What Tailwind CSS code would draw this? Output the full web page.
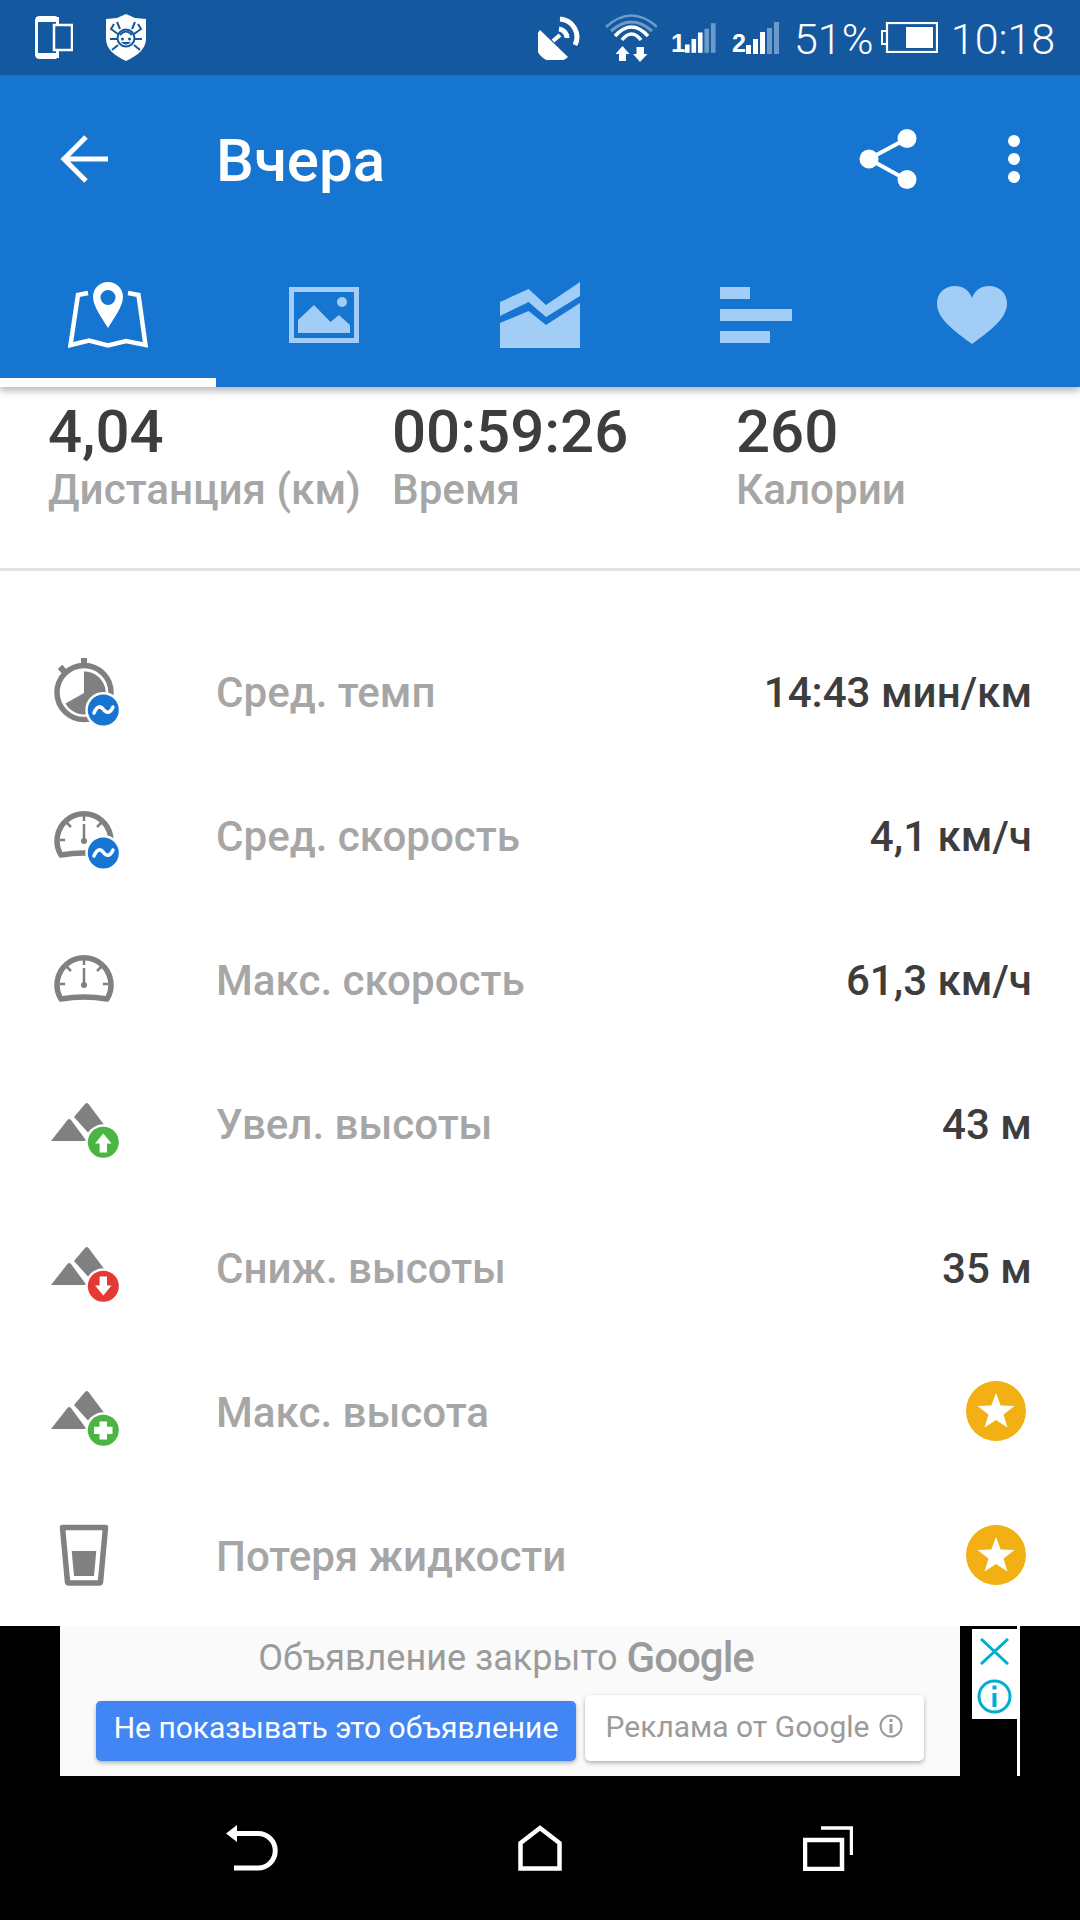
<!DOCTYPE html>
<html lang="ru">
<head>
    <meta charset="UTF-8">
    <meta name="viewport" content="width=device-width, initial-scale=1.0">
    <title>Вчера</title>
    <script src="https://cdn.jsdelivr.net/npm/@tailwindcss/browser@4"></script>
</head>
<body class="bg-white w-[1080px] h-[1920px] overflow-hidden font-['Roboto',sans-serif]">
    <!-- Status bar -->
    <div class="h-[75px] bg-[#14599f] flex items-center text-white">
        <svg class="ml-[35px] w-[38px] h-[43px]" viewBox="0 0 38 43">
            <rect x="1.5" y="1.5" width="21" height="40" rx="3" fill="none" stroke="#fff" stroke-width="3"/>
            <rect x="1" y="1" width="23" height="5" fill="#fff"/>
            <rect x="1" y="37" width="23" height="5" fill="#fff"/>
            <rect x="19" y="9" width="18" height="25" fill="#14599f" stroke="#fff" stroke-width="2.5"/>
        </svg>
        <svg class="ml-[32px] w-[42px] h-[47px]" viewBox="0 0 42 47">
            <path d="M21 0 L30 4 L41 5 V25 C41 35 32 42 21 47 C10 42 1 35 1 25 V5 L12 4Z" fill="#fff"/>
            <g stroke="#14599f" stroke-width="2" fill="none">
                <path d="M13 20 L6 15 L9 10 M29 20 L36 15 L33 10 M12 25 H5 M30 25 H37 M13 31 L7 36 M29 31 L35 36 M15 15 L12 8 M27 15 L30 8"/>
                <circle cx="21" cy="24" r="8.500" fill="#fff"/>
                <path d="M15 21 Q21 14 27 21"/>
            </g>
            <circle cx="17.500" cy="25" r="1.500" fill="#14599f"/>
            <circle cx="24.500" cy="25" r="1.500" fill="#14599f"/>
            <path d="M16 28 Q21 33 26 28 Z" fill="#14599f"/>
        </svg>
        <!-- dish -->
        <svg class="ml-auto w-[44px] h-[44px]" viewBox="-1 0 44 44" fill="none">
            <path d="M1 14 L29 41 A 19.5 19.5 0 0 1 1 14Z" fill="#fff"/>
            <path d="M21 3 A 18 18 0 0 1 36 29" stroke="#fff" stroke-width="5"/>
            <path d="M20 13 A 9 9 0 0 1 28 22" stroke="#fff" stroke-width="5"/>
            <path d="M14 25 L21 19" stroke="#fff" stroke-width="4"/>
        </svg>
        <!-- wifi -->
        <svg class="ml-[23px] w-[52px] h-[49px]" viewBox="0 0 52 49" fill="none">
            <path d="M1 14 Q26.500 -9 52 14" stroke="#6d9bc9" stroke-width="2.500"/>
            <path d="M6 18 Q26.500 0 47 18" stroke="#6d9bc9" stroke-width="3"/>
            <path d="M10 23 Q26.500 5 43 23" stroke="#fff" stroke-width="3.500"/>
            <path d="M17 27 Q26.500 15 36 27" stroke="#fff" stroke-width="3.500"/>
            <path d="M17.500 33 L24.500 41 H21 V48 H14 V41 H10.500Z" fill="#fff"/>
            <path d="M35 49 L42.500 41 H39 V34 H31.500 V41 H28Z" fill="#fff"/>
        </svg>
        <!-- sim 1 -->
        <div class="ml-[14px] w-[45px] h-[32px] flex items-end justify-between font-['Liberation_Sans',sans-serif]">
            <span class="text-[26px] leading-[22px] font-bold">1</span>
            <svg class="w-[33px] h-[32px]" viewBox="0 0 33 32" fill="#fff">
                <rect x="0" y="23" width="5" height="9"/><rect x="7" y="17" width="5" height="15"/><rect x="14" y="10" width="5" height="22"/>
                <rect x="21" y="6" width="5" height="26" fill="#6d9bc9"/><rect x="28" y="0" width="5" height="32" fill="#6d9bc9"/>
            </svg>
        </div>
        <!-- sim 2 -->
        <div class="ml-[16px] w-[47px] h-[32px] flex items-end justify-between font-['Liberation_Sans',sans-serif]">
            <span class="text-[25px] leading-[22px] font-bold">2</span>
            <svg class="w-[33px] h-[32px]" viewBox="0 0 33 32" fill="#fff">
                <rect x="0" y="23" width="5" height="9"/><rect x="7" y="17" width="5" height="15"/><rect x="14" y="10" width="5" height="22"/>
                <rect x="21" y="6" width="5" height="26" fill="#6d9bc9"/><rect x="28" y="0" width="5" height="32" fill="#6d9bc9"/>
            </svg>
        </div>
        <span class="ml-[15px] w-[78px] pt-[2px] text-center text-[43px] leading-[50px] font-light">51%</span>
        <!-- battery -->
        <svg class="ml-[9px] w-[57px] h-[31px]" viewBox="0 0 57 31" fill="#fff">
            <rect x="6" y="1" width="50" height="29" fill="none" stroke="#fff" stroke-width="2.200"/>
            <path d="M5 9 H1 V22 H5" fill="none" stroke="#fff" stroke-width="2"/>
            <rect x="25" y="5" width="27" height="21"/>
        </svg>
        <span class="ml-[12px] mr-[24px] w-[106px] pt-[2px] text-center text-[43px] leading-[50px] font-light">10:18</span>
    </div>

    <!-- Toolbar with tabs -->
    <header class="relative z-10 bg-[#1675d1] shadow-[0_4px_7px_rgba(0,0,0,0.28)]">
        <div class="h-[168px] flex items-center pl-[60px] text-white">
            <svg class="w-[48px] h-[48px]" viewBox="0 0 48 48" fill="none" stroke="#fff" stroke-width="5">
                <path d="M48 24 H5 M26 2 L4 24 L26 46"/>
            </svg>
            <h1 class="ml-[108px] pt-[3px] text-[60px] leading-[60px] font-medium">Вчера</h1>
            <svg class="ml-auto w-[58px] h-[60px]" viewBox="0 0 58 60" fill="#fff" stroke="#fff">
                <path d="M48 9.500 L10 30 L48 51" fill="none" stroke-width="4"/>
                <circle cx="48" cy="9.500" r="9.500" stroke="none"/>
                <circle cx="10" cy="30" r="9.500" stroke="none"/>
                <circle cx="48" cy="50.500" r="9.500" stroke="none"/>
            </svg>
            <svg class="ml-[91px] mr-[60px] w-[12px] h-[48px]" viewBox="0 0 12 48" fill="#fff">
                <circle cx="6" cy="6" r="6"/><circle cx="6" cy="24" r="6"/><circle cx="6" cy="42" r="6"/>
            </svg>
        </div>
        <nav class="h-[144px] grid grid-cols-5">
            <div class="relative flex items-center justify-center">
                <svg class="w-[80px] h-[66px]" viewBox="0 0 80 66">
                    <path d="M20 11 L10 13 L2.500 63 L21 58.500 L40 63.500 L58 59 L77.500 63 L70.500 13 L60 11" fill="none" stroke="#fff" stroke-width="4.500"/>
                    <path fill-rule="evenodd" fill="#fff" d="M40 0 C49 0 55 7 55 15 C55 24 46 36 40 46 C34 36 25 24 25 15 C25 7 31 0 40 0Z M40 8 A7.500 7.500 0 1 0 40 23 A7.500 7.500 0 1 0 40 8Z"/>
                </svg>
                <div class="absolute left-0 bottom-0 w-full h-[9px] bg-white"></div>
            </div>
            <div class="flex items-center justify-center">
                <svg class="w-[70px] h-[56px]" viewBox="0 0 70 56" fill="#a2cdf7">
                    <rect x="2.500" y="2.500" width="65" height="51" fill="none" stroke="#a2cdf7" stroke-width="5"/>
                    <path d="M9 46 V33 L25 18 L41.500 35 L50 28 L61 38 V46Z"/>
                    <circle cx="53" cy="15" r="5"/>
                </svg>
            </div>
            <div class="flex items-center justify-center">
                <svg class="w-[80px] h-[66px]" viewBox="0 0 80 66" fill="#a2cdf7">
                    <path d="M0 20 L28.600 7 L46 23 L80 0 V14 L46 35 L28.600 20 L0 34Z"/>
                    <path d="M0 41 L28.600 29 L46 43 L80 21 V66 H0Z"/>
                </svg>
            </div>
            <div class="flex items-center justify-center">
                <div class="w-[72px] flex flex-col gap-[10px]">
                    <div class="w-[30px] h-[12px] bg-[#a2cdf7]"></div>
                    <div class="w-[72px] h-[12px] bg-[#a2cdf7]"></div>
                    <div class="w-[50px] h-[12px] bg-[#a2cdf7]"></div>
                </div>
            </div>
            <div class="flex items-center justify-center">
                <svg class="w-[70px] h-[58px]" viewBox="0 0 70 58" fill="#a2cdf7">
                    <path d="M35 58 C10 40 0 30 0 17 C0 7 8 0 18 0 C26 0 32 4 35 12 C38 4 44 0 52 0 C62 0 70 7 70 17 C70 30 60 40 35 58Z"/>
                </svg>
            </div>
        </nav>
    </header>

    <!-- Scrolling content -->
    <main class="h-[1239px] overflow-hidden">
        <div class="h-[184px] border-b-[3px] border-[#e2e2e2] pt-[15px] pl-[48px] grid grid-cols-[344px_344px_1fr]">
            <div>
                <div class="text-[60px] leading-[60px] font-medium text-[#3d3d3d]">4,04</div>
                <div class="text-[42.2px] leading-[56px] font-medium text-[#a6a6a6]">Дистанция (км)</div>
            </div>
            <div>
                <div class="text-[60px] leading-[60px] font-medium text-[#3d3d3d]">00:59:26</div>
                <div class="text-[42.2px] leading-[56px] font-medium text-[#a6a6a6]">Время</div>
            </div>
            <div>
                <div class="text-[60px] leading-[60px] font-medium text-[#3d3d3d]">260</div>
                <div class="text-[42.2px] leading-[56px] font-medium text-[#a6a6a6]">Калории</div>
            </div>
        </div>

        <div class="pt-[49px]">
            <!-- Сред. темп -->
            <div class="h-[144px] flex items-center pl-[48px] pr-[48px] text-[42.1px] font-medium">
                <svg class="mt-[2px] w-[80px] h-[80px]" viewBox="0 0 80 80" fill="#808080">
                    <circle cx="36" cy="39.500" r="27" fill="none" stroke="#808080" stroke-width="5.500"/>
                    <rect x="33" y="5" width="6" height="8"/>
                    <rect x="11" y="13" width="6" height="6" transform="rotate(-40 14 16)"/>
                    <path d="M36 40 V18.500 A21.500 21.500 0 1 1 17.500 50.500 Z"/>
                    <circle cx="55.300" cy="57" r="18" fill="#fff"/>
                    <circle cx="55.300" cy="57" r="15.500" fill="#1675d1"/>
                    <path d="M46 60 C49 52 53 53 55.500 56.500 C58 60 62 61 65 54" fill="none" stroke="#fff" stroke-width="3.500" stroke-linecap="round"/>
                </svg>
                <span class="ml-[88px] pt-[2px] text-[#a6a6a6]">Сред. темп</span>
                <span class="ml-auto pt-[2px] text-[#3d3d3d]">14:43 мин/км</span>
            </div>
            <!-- Сред. скорость -->
            <div class="h-[144px] flex items-center pl-[48px] pr-[48px] text-[42.1px] font-medium">
                <svg class="w-[80px] h-[80px]" viewBox="0 0 80 80" fill="#808080">
                    <path d="M13 59 A27 27 0 1 1 59 59 Q36 55 13 59Z" fill="none" stroke="#808080" stroke-width="5.500" stroke-linejoin="round"/>
                    <path d="M36 18 V25 M12 44 H17 M60 44 H55 M19 27 L23 31 M53 27 L49 31 M36 28 V44" stroke="#808080" stroke-width="2.500"/>
                    <circle cx="36" cy="45" r="3"/>
                    <circle cx="55.300" cy="57" r="18" fill="#fff"/>
                    <circle cx="55.300" cy="57" r="15.500" fill="#1675d1"/>
                    <path d="M46 60 C49 52 53 53 55.500 56.500 C58 60 62 61 65 54" fill="none" stroke="#fff" stroke-width="3.500" stroke-linecap="round"/>
                </svg>
                <span class="ml-[88px] pt-[2px] text-[#a6a6a6]">Сред. скорость</span>
                <span class="ml-auto pt-[2px] text-[#3d3d3d]">4,1 км/ч</span>
            </div>
            <!-- Макс. скорость -->
            <div class="h-[144px] flex items-center pl-[48px] pr-[48px] text-[42.1px] font-medium">
                <svg class="w-[80px] h-[80px]" viewBox="0 0 80 80" fill="#808080">
                    <path d="M13 59 A27 27 0 1 1 59 59 Q36 55 13 59Z" fill="none" stroke="#808080" stroke-width="5.500" stroke-linejoin="round"/>
                    <path d="M36 18 V25 M12 44 H17 M60 44 H55 M19 27 L23 31 M53 27 L49 31 M36 28 V44" stroke="#808080" stroke-width="2.500"/>
                    <circle cx="36" cy="45" r="3"/>
                </svg>
                <span class="ml-[88px] pt-[2px] text-[#a6a6a6]">Макс. скорость</span>
                <span class="ml-auto pt-[2px] text-[#3d3d3d]">61,3 км/ч</span>
            </div>
            <!-- Увел. высоты -->
            <div class="h-[144px] flex items-center pl-[48px] pr-[48px] text-[42.1px] font-medium">
                <svg class="w-[80px] h-[80px]" viewBox="0 0 80 80" fill="#808080">
                    <path d="M26 33 L37 20 Q38.700 18 40.500 20 L57 42 L44 53Z"/>
                    <path d="M3 57 L19.500 36 Q21 34 23 36 L38.500 57Z"/>
                    <circle cx="55.300" cy="58.300" r="18" fill="#fff"/>
                    <circle cx="55.300" cy="58.300" r="15.500" fill="#4bb543"/>
                    <path d="M55.300 49.500 L63.500 59.500 H59 V68.500 H51.600 V59.500 H47.100Z" fill="#fff"/>
                </svg>
                <span class="ml-[88px] pt-[2px] text-[#a6a6a6]">Увел. высоты</span>
                <span class="ml-auto pt-[2px] text-[#3d3d3d]">43 м</span>
            </div>
            <!-- Сниж. высоты -->
            <div class="h-[144px] flex items-center pl-[48px] pr-[48px] text-[42.1px] font-medium">
                <svg class="w-[80px] h-[80px]" viewBox="0 0 80 80" fill="#808080">
                    <path d="M26 33 L37 20 Q38.700 18 40.500 20 L57 42 L44 53Z"/>
                    <path d="M3 57 L19.500 36 Q21 34 23 36 L38.500 57Z"/>
                    <circle cx="55.300" cy="58.300" r="18" fill="#fff"/>
                    <circle cx="55.300" cy="58.300" r="15.500" fill="#e53935"/>
                    <path d="M55.300 67.500 L63.500 57.500 H59 V48.500 H51.600 V57.500 H47.100Z" fill="#fff"/>
                </svg>
                <span class="ml-[88px] pt-[2px] text-[#a6a6a6]">Сниж. высоты</span>
                <span class="ml-auto pt-[2px] text-[#3d3d3d]">35 м</span>
            </div>
            <!-- Макс. высота -->
            <div class="h-[144px] flex items-center pl-[48px] pr-[48px] text-[42.1px] font-medium">
                <svg class="w-[80px] h-[80px]" viewBox="0 0 80 80" fill="#808080">
                    <path d="M26 33 L37 20 Q38.700 18 40.500 20 L57 42 L44 53Z"/>
                    <path d="M3 57 L19.500 36 Q21 34 23 36 L38.500 57Z"/>
                    <circle cx="55.300" cy="58.300" r="18" fill="#fff"/>
                    <circle cx="55.300" cy="58.300" r="15.500" fill="#4bb543"/>
                    <path d="M51.500 49.500 H59 V54.800 H64.500 V62 H59 V67.500 H51.500 V62 H46 V54.800 H51.500Z" fill="#fff"/>
                </svg>
                <span class="ml-[88px] pt-[2px] text-[#a6a6a6]">Макс. высота</span>
                <svg class="ml-auto mr-[6px] mb-[2px] w-[60px] h-[60px]" viewBox="0 0 60 60">
                    <circle cx="30" cy="30" r="30" fill="#f2b014"/>
                    <path d="M30 12 L34.700 24.500 L48.500 25.100 L37.600 33.500 L41.400 46.400 L30 39 L18.600 46.400 L22.400 33.500 L11.500 25.100 L25.300 24.500Z" fill="#fff"/>
                </svg>
            </div>
            <!-- Потеря жидкости -->
            <div class="h-[144px] flex items-center pl-[48px] pr-[48px] text-[42.1px] font-medium">
                <svg class="w-[80px] h-[80px]" viewBox="0 0 80 80" fill="#808080">
                    <path d="M14.500 11.500 H57.500 L52.500 66 Q52.300 67 51 67 H21 Q19.700 67 19.500 66Z" fill="none" stroke="#808080" stroke-width="5.500" stroke-linejoin="round"/>
                    <path d="M23.700 35 H48.300 L46 60 H26Z"/>
                </svg>
                <span class="ml-[88px] pt-[2px] text-[#a6a6a6]">Потеря жидкости</span>
                <svg class="ml-auto mr-[6px] mb-[2px] w-[60px] h-[60px]" viewBox="0 0 60 60">
                    <circle cx="30" cy="30" r="30" fill="#f2b014"/>
                    <path d="M30 12 L34.700 24.500 L48.500 25.100 L37.600 33.500 L41.400 46.400 L30 39 L18.600 46.400 L22.400 33.500 L11.500 25.100 L25.300 24.500Z" fill="#fff"/>
                </svg>
            </div>
        </div>
    </main>

    <!-- Ad banner and system nav -->
    <footer class="h-[294px] bg-black">
        <div class="h-[150px] pl-[60px] flex">
            <div class="w-[900px] h-[150px] bg-[#fafafa] flex flex-col">
                <div class="h-[69px] pb-[6px] flex items-center justify-center text-[#9b9b9b] pr-[8px]">
                    <span class="text-[36px] leading-[60px]">Объявление закрыто</span>
                    <span class="ml-[9px] text-[42px] leading-[60px] font-medium tracking-[-1px]">Google</span>
                </div>
                <div class="pl-[36px] flex items-end gap-[9px]">
                    <div class="w-[480px] h-[60px] pb-[8px] rounded-[5px] bg-[#4285f4] text-white text-[30px] flex items-center justify-center shadow-[0_2px_4px_rgba(0,0,0,0.3)]">Не показывать это объявление</div>
                    <div class="w-[339px] h-[66px] pb-[4px] rounded-[5px] bg-white text-[#9b9b9b] text-[30px] flex items-center justify-center gap-[10px] shadow-[0_2px_4px_rgba(0,0,0,0.3)]">
                        <span>Реклама от Google</span>
                        <svg class="w-[24px] h-[24px]" viewBox="0 0 24 24" fill="none" stroke="#9b9b9b" stroke-width="2">
                            <circle cx="12" cy="12" r="10.500"/>
                            <path d="M12 10 V19 M12 5 V8" stroke-width="3"/>
                        </svg>
                    </div>
                </div>
            </div>
            <div class="ml-[12px] mt-[3px] w-[45px] h-[90px] bg-white flex flex-col items-center">
                <svg class="mt-[9px] w-[29px] h-[27px]" viewBox="0 0 29 27" fill="none" stroke="#00aecd" stroke-width="3">
                    <path d="M1 1 L28 26 M28 1 L1 26"/>
                </svg>
                <svg class="mt-[14px] w-[35px] h-[35px]" viewBox="0 0 35 35" fill="none" stroke="#00aecd" stroke-width="3">
                    <circle cx="17.500" cy="17.500" r="15.500"/>
                    <path d="M17.500 14 V28 M17.500 6.500 V10.500" stroke-width="4"/>
                </svg>
            </div>
            <div class="w-[3px] h-[150px] bg-white"></div>
        </div>
        <div class="h-[144px] px-[108px] grid grid-cols-3">
            <div class="flex items-center justify-center">
                <svg class="w-[52px] h-[46px]" viewBox="0 0 52 46" fill="none" stroke="#fff" stroke-width="5">
                    <path d="M0 8.500 L11 0 V17Z" fill="#fff" stroke="none"/>
                    <path d="M10 8.500 H32 A17.250 17.250 0 0 1 32 43 H8"/>
                </svg>
            </div>
            <div class="flex items-center justify-center">
                <svg class="w-[44px] h-[46px]" viewBox="0 0 44 46" fill="none" stroke="#fff" stroke-width="4.500">
                    <path d="M22 3 L41.500 18 V43.500 H2.500 V18Z"/>
                </svg>
            </div>
            <div class="flex items-center justify-center">
                <svg class="w-[50px] h-[46px]" viewBox="0 0 50 46" fill="none" stroke="#fff">
                    <rect x="2" y="15" width="37" height="29" stroke-width="4.500"/>
                    <path d="M18 3 H48.500 V30" stroke-width="3.500"/>
                </svg>
            </div>
        </div>
    </footer>
</body>
</html>
